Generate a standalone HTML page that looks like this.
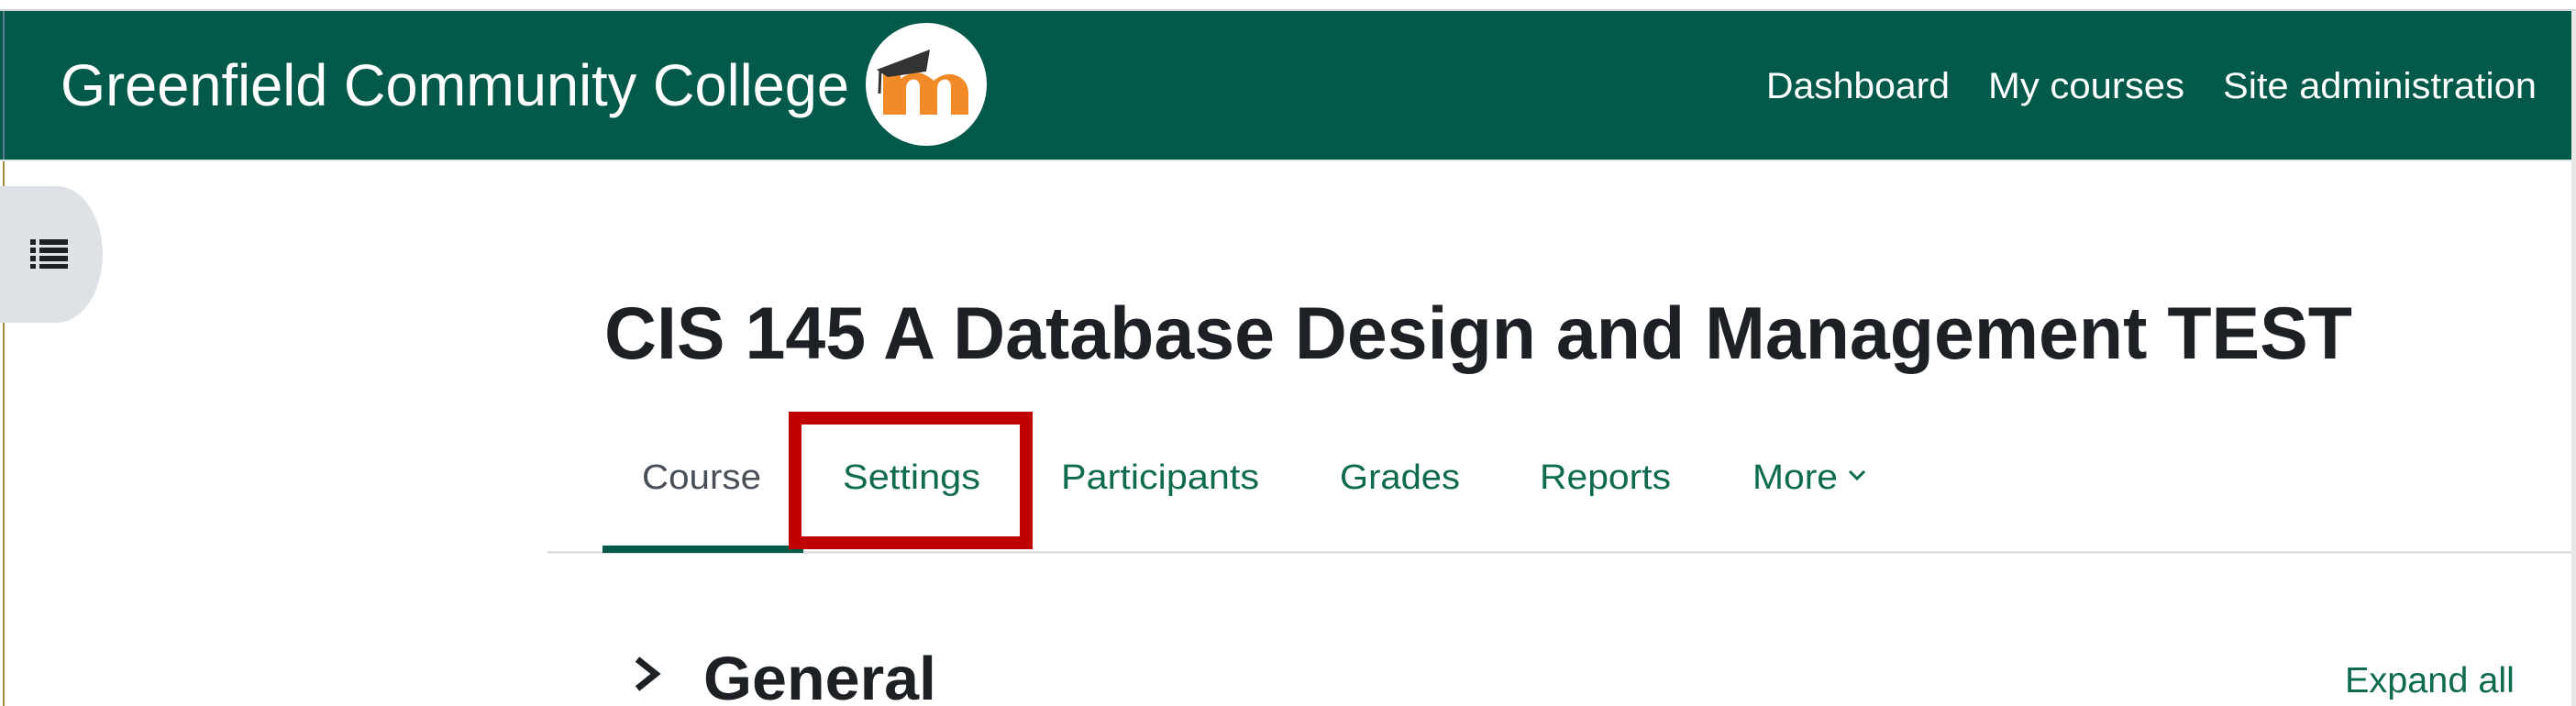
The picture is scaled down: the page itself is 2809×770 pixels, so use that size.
<!DOCTYPE html>
<html><head><meta charset="utf-8"><style>
html,body{margin:0;padding:0;background:#fff;width:2809px;height:770px;overflow:hidden}
svg{display:block}
</style></head><body>
<svg width="2809" height="770" viewBox="0 0 2809 770" xmlns="http://www.w3.org/2000/svg" font-family="Liberation Sans, sans-serif">
<rect x="0" y="0" width="2809" height="770" fill="#fff"/>
<rect x="0" y="10" width="2809" height="2" fill="#d0d4d6"/>
<rect x="0" y="12" width="2809" height="162" fill="#03594a"/>
<rect x="0" y="174" width="2809" height="2" fill="#e4e8ea"/>
<rect x="3" y="12" width="2" height="162" fill="#5a7b8c"/>
<rect x="3" y="176" width="2" height="594" fill="#a88a3c"/>
<rect x="2804" y="12" width="5" height="758" fill="#e8e8e8"/>
<text x="66" y="115" font-size="64" fill="#fff" textLength="860" lengthAdjust="spacingAndGlyphs">Greenfield Community College</text>
<ellipse cx="1010" cy="92" rx="66" ry="67" fill="#fff"/>
<path d="M963 125 V80 h19 v6 q12-9 23-6 q8 3 13 8 q12-10 24-6 q14 5 14 20 V125 h-19 V93 q-2-8-9-6 q-6 2-6 10 V125 h-19 V93 q-2-8-9-6 q-6 2-6 10 V125 z" fill="#f28a27"/>
<path d="M956 76 l58-22 l-4 24 l-42 6 z" fill="#333"/>
<path d="M960 76 l-1 26" stroke="#333" stroke-width="3"/>
<text x="1926" y="107" font-size="40" fill="#fff" textLength="200" lengthAdjust="spacingAndGlyphs">Dashboard</text>
<text x="2168" y="107" font-size="40" fill="#fff" textLength="214" lengthAdjust="spacingAndGlyphs">My courses</text>
<text x="2424" y="107" font-size="40" fill="#fff" textLength="342" lengthAdjust="spacingAndGlyphs">Site administration</text>
<path d="M0 203 H62 A50 75 0 0 1 112 278 A50 75 0 0 1 62 352 H0 Z" fill="#dee2e6"/>
<g fill="#1d2125">
<rect x="33" y="261" width="6" height="6"/><rect x="43" y="261" width="31" height="6"/>
<rect x="33" y="270" width="6" height="6"/><rect x="43" y="270" width="31" height="6"/>
<rect x="33" y="279" width="6" height="6"/><rect x="43" y="279" width="31" height="6"/>
<rect x="33" y="288" width="6" height="5"/><rect x="43" y="288" width="31" height="5"/>
</g>
<text x="659" y="391" font-size="81" font-weight="bold" fill="#1d2125" textLength="1906" lengthAdjust="spacingAndGlyphs">CIS 145 A Database Design and Management TEST</text>
<text x="700" y="533" font-size="38" fill="#495057" textLength="130" lengthAdjust="spacingAndGlyphs">Course</text>
<text x="919" y="533" font-size="38" fill="#0f6b50" textLength="150" lengthAdjust="spacingAndGlyphs">Settings</text>
<text x="1157" y="533" font-size="38" fill="#0f6b50" textLength="216" lengthAdjust="spacingAndGlyphs">Participants</text>
<text x="1461" y="533" font-size="38" fill="#0f6b50" textLength="131" lengthAdjust="spacingAndGlyphs">Grades</text>
<text x="1679" y="533" font-size="38" fill="#0f6b50" textLength="143" lengthAdjust="spacingAndGlyphs">Reports</text>
<text x="1911" y="533" font-size="38" fill="#0f6b50" textLength="93" lengthAdjust="spacingAndGlyphs">More</text>
<path d="M2017 514 l8 8 l8-8" stroke="#0f6b50" stroke-width="3" fill="none"/>
<rect x="597" y="601" width="2207" height="3" fill="#dee2e6"/>
<rect x="657" y="595" width="219" height="8" fill="#03594a"/>
<rect x="867" y="456" width="252" height="136" fill="none" stroke="#c00000" stroke-width="14"/>
<path d="M695 719 l20 16 l-20 16" stroke="#1d2125" stroke-width="7" fill="none"/>
<text x="767" y="763" font-size="67" font-weight="bold" fill="#1d2125" textLength="254" lengthAdjust="spacingAndGlyphs">General</text>
<text x="2557" y="755" font-size="39" fill="#0f6b50" textLength="185" lengthAdjust="spacingAndGlyphs">Expand all</text>
</svg>
</body></html>
